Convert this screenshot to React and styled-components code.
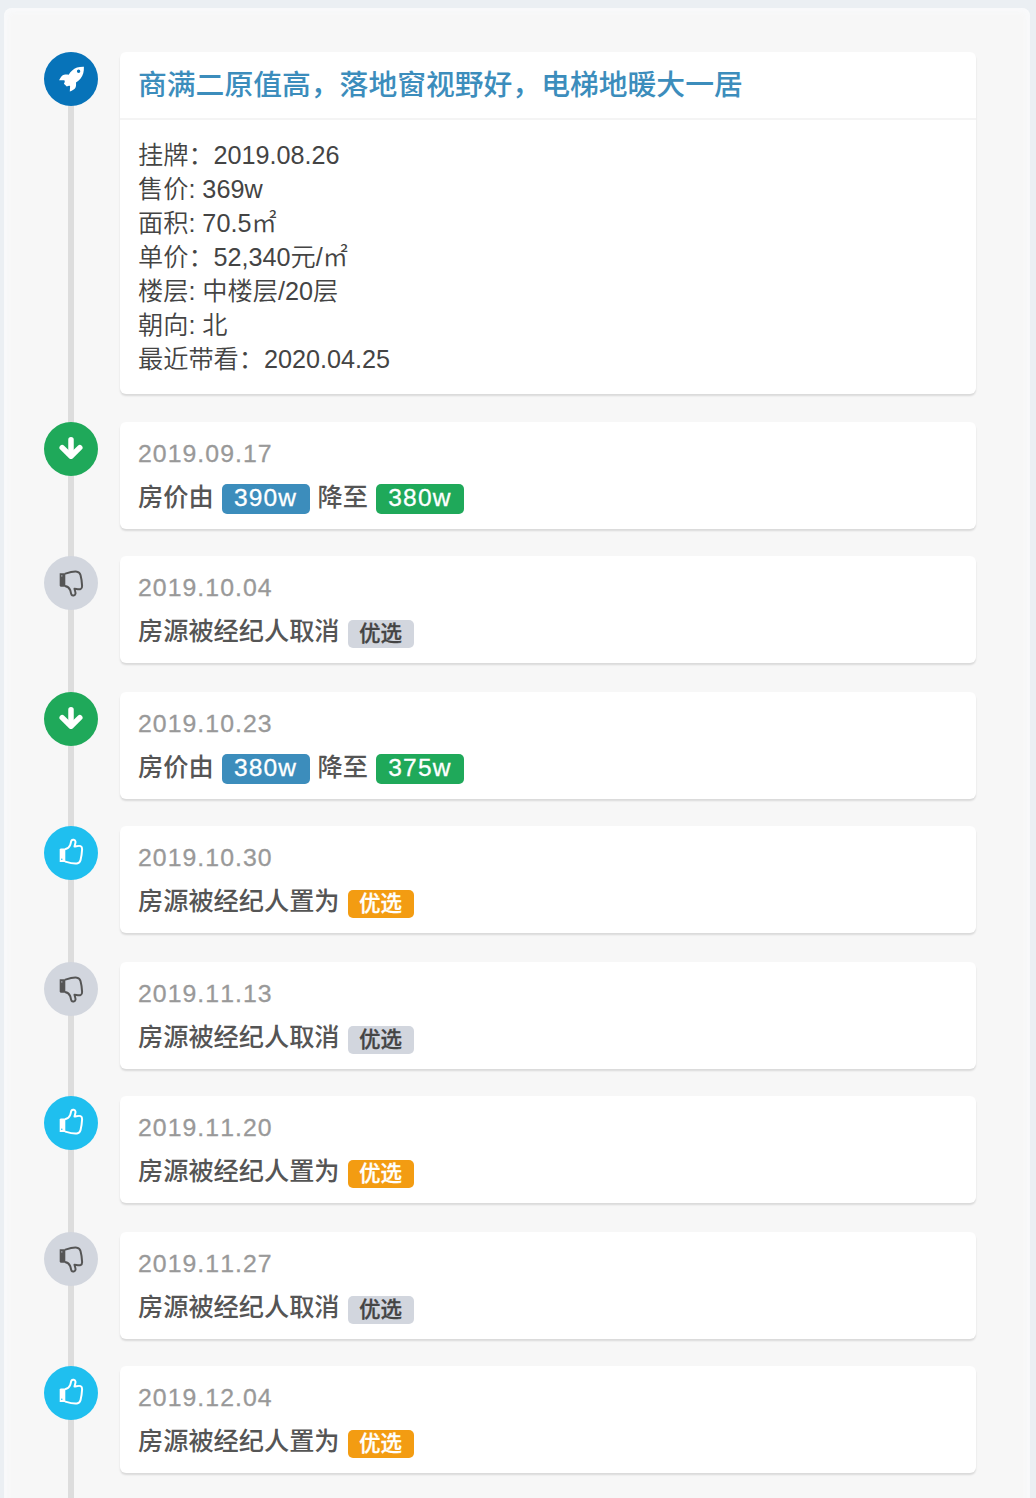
import React from 'react';
import styled, { createGlobalStyle } from 'styled-components';

const GlobalStyle = createGlobalStyle`
  * {
    box-sizing: border-box;
  }

  body {
    margin: 0;
    background: #ebeff3;
    color: #444;
    font-family: 'Liberation Sans', 'Noto Sans CJK SC', sans-serif;
    font-kerning: none;
  }
`;

const Page = styled.main`
  height: 1498px;
  padding: 8px 6px 0 4px;
  overflow: hidden;
`;

const Panel = styled.section`
  height: 1510px;
  padding: 44px 54px 0 40px;
  border-radius: 8px;
  background: #f7f7f7;
  box-shadow: inset 0 0 6px 3px #f9fafc;
`;

const List = styled.ul`
  height: 100%;
  margin: 0;
  padding: 0;
  list-style: none;
  background: linear-gradient(#ddd, #ddd) 24px 0 / 6px 100% no-repeat;
`;

const Item = styled.li`
  display: flex;
  align-items: flex-start;
  gap: 22px;
  height: ${({ $height }) => $height}px;
`;

const Badge = styled.span`
  display: flex;
  flex: none;
  align-items: center;
  justify-content: center;
  width: 54px;
  height: 54px;
  border-radius: 50%;
  background: ${({ $bg }) => $bg};
  color: ${({ $color }) => $color || '#fff'};
`;

const Icon = styled.svg`
  width: 26px;
  height: 26px;
  overflow: visible;
`;

const Card = styled.article`
  flex: 1;
  height: ${({ $height }) => $height || 107}px;
  border-radius: 6px;
  background: #fff;
  box-shadow: 0 2px 2px rgba(0, 0, 0, 0.12);
`;

const Title = styled.h3`
  height: 68px;
  margin: 0;
  padding: 0 18px;
  border-bottom: 2px solid #f4f4f4;
  color: #3c8dbc;
  font-size: 28.8px;
  font-weight: 500;
  line-height: 66px;
`;

const Details = styled.div`
  padding: 18px;
  font-size: 25.2px;
  font-weight: 350;
  line-height: 34px;
`;

const DetailRow = styled.div`
  height: 34px;
  white-space: pre;
`;

const DateText = styled.div`
  height: 44px;
  padding: 0 18px;
  color: #999;
  font-size: 24.8px;
  letter-spacing: 1.05px;
  line-height: 64px;
  -webkit-text-stroke: 0.3px currentColor;
`;

const Event = styled.div`
  display: flex;
  align-items: flex-start;
  padding: 13px 18px 0;
  color: #555;
  font-size: 25.2px;
  font-weight: 500;
  line-height: 36px;
`;

const Label = styled.span`
  width: ${({ $small }) => ($small ? 66 : 88)}px;
  height: ${({ $small }) => ($small ? 28 : 30)}px;
  margin: ${({ $small }) => ($small ? '7px 8px 0' : '5px 8px 0')};
  border-radius: 5px;
  background: ${({ $bg }) => $bg};
  color: ${({ $color }) => $color || '#fff'};
  font-size: ${({ $small }) => ($small ? 21.5 : 24.5)}px;
  letter-spacing: ${({ $small }) => ($small ? 0 : 1.2)}px;
  line-height: ${({ $small }) => ($small ? 29 : 28)}px;
  text-align: center;
  -webkit-text-stroke: 0.3px currentColor;
`;

const RocketIcon = () => (
  <Icon viewBox="0 0 26 26">
    <path
      fill="currentColor"
      fillRule="evenodd"
      d="M25.900.8c-5-.1-8.600.8-12 4-1.300 1.200-2.300 2.400-3.200 3.900-2.500-.3-4.600-.4-6.300.9C2.900 10.900 2 12.500 1.100 14.300l5.200-.1c.8 1 .5 1.800-.4 3.500l2.900 2.900c1.700-.9 2.600-1 3.300-.3l-.3 5.100c2-.7 3.700-1.400 4.900-2.700 1.500-1.700 1.500-4 1.300-6.300 1.700-1.100 3.200-2.300 4.400-3.700 2.900-3.400 3.600-7 3.500-11.900zM20.600 3.600a1.700 1.700 0 1 1 0 3.400 1.700 1.700 0 0 1 0-3.400z"
    />
  </Icon>
);

const ArrowIcon = () => (
  <Icon viewBox="0 0 26 26" fill="none" stroke="currentColor" strokeWidth="5.5">
    <path d="M13 3.700v15" strokeLinecap="round" />
    <path d="M4.200 11.600l8.800 8.600 8.800-8.600" strokeLinecap="round" strokeLinejoin="round" />
  </Icon>
);

const ThumbIcon = ({ down }) => (
  <Icon viewBox="0 0 26 26" fill="none" stroke="currentColor">
    <g transform={down ? 'matrix(1 0 0 -1 0 25.2)' : undefined}>
      <path
        d="M7 9.200c3.200-.5 4.300-1.700 5.200-4.200.6-1.700.7-3.400 1.300-4.400 1-1.500 3.700-1 4 1 .2 1.700-.8 3.200-1 4.900 2-.2 4.300-1.100 6.100-.4 1.400.6 1.600 1.700 1.500 3.200-.2 3.800-.6 7.500-1.600 11-.6 2-1.600 2.900-3.600 3.200-4 .5-7.700-.7-11.900-2"
        strokeWidth="2"
        strokeLinejoin="round"
      />
      <path fill="currentColor" stroke="none" d="M2.600 8.400h4.700v13.600H1.700V9.500z" />
      <circle cx="3.800" cy="19.300" r="0.800" fill={down ? '#999ca2' : '#1fbfef'} stroke="none" />
    </g>
  </Icon>
);

const details = [
  '挂牌：2019.08.26',
  '售价: 369w',
  '面积: 70.5㎡',
  '单价：52,340元/㎡',
  '楼层: 中楼层/20层',
  '朝向: 北',
  '最近带看：2020.04.25',
];

const events = [
  { date: '2019.09.17', type: 'price', from: '390w', to: '380w' },
  { date: '2019.10.04', type: 'cancel' },
  { date: '2019.10.23', type: 'price', from: '380w', to: '375w' },
  { date: '2019.10.30', type: 'select' },
  { date: '2019.11.13', type: 'cancel' },
  { date: '2019.11.20', type: 'select' },
  { date: '2019.11.27', type: 'cancel' },
  { date: '2019.12.04', type: 'select' },
];

const badges = {
  price: { bg: '#1fa95a', icon: <ArrowIcon /> },
  cancel: { bg: '#d2d6de', color: '#555', icon: <ThumbIcon down /> },
  select: { bg: '#1fbfef', icon: <ThumbIcon /> },
};

const EventText = ({ type, from, to }) => {
  if (type === 'price') {
    return (
      <Event>
        房价由<Label $bg="#3c8dbc">{from}</Label>
        降至<Label $bg="#1fa95a">{to}</Label>
      </Event>
    );
  }
  const cancelled = type === 'cancel';
  return (
    <Event>
      {cancelled ? '房源被经纪人取消' : '房源被经纪人置为'}
      <Label $small $bg={cancelled ? '#d2d6de' : '#f39c12'} $color={cancelled ? '#444' : '#fff'}>
        优选
      </Label>
    </Event>
  );
};

const App = () => (
  <Page>
    <GlobalStyle />
    <Panel>
      <List>
        <Item $height={370}>
          <Badge $bg="#0773b9">
            <RocketIcon />
          </Badge>
          <Card $height={342}>
            <Title>商满二原值高，落地窗视野好，电梯地暖大一居</Title>
            <Details>
              {details.map((text) => (
                <DetailRow key={text}>{text}</DetailRow>
              ))}
            </Details>
          </Card>
        </Item>
        {events.map((event, index) => (
          <Item key={event.date} $height={index % 2 ? 136 : 134}>
            <Badge $bg={badges[event.type].bg} $color={badges[event.type].color}>
              {badges[event.type].icon}
            </Badge>
            <Card>
              <DateText>{event.date}</DateText>
              <EventText {...event} />
            </Card>
          </Item>
        ))}
      </List>
    </Panel>
  </Page>
);

export default App;
